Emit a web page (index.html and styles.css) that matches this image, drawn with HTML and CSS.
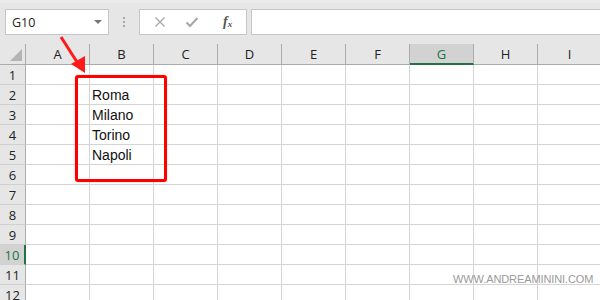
FILE: index.html
```html
<!DOCTYPE html>
<html>
<head>
<meta charset="utf-8">
<link rel="stylesheet" href="styles.css">
</head>
<body>
<div class="app">
  <div class="toolbar">
    <div class="namebox">
      <span class="ref">G10</span>
      <span class="caret"></span>
    </div>
    <div class="dots"><i></i><i></i><i></i></div>
    <div class="fxbox">
      <svg class="ico" width="12" height="12" viewBox="0 0 12 12"><path d="M1.5 1.5 L10.5 10.5 M10.5 1.5 L1.5 10.5" stroke="#a6a6a6" stroke-width="1.3" fill="none"/></svg>
      <svg class="ico" width="14" height="12" viewBox="0 0 14 12"><path d="M1.5 6.5 L5 10 L12.5 2" stroke="#a6a6a6" stroke-width="2" fill="none"/></svg>
      <span class="fx">f<sub>x</sub></span>
    </div>
    <div class="formula"></div>
  </div>
  <div class="sheet">
    <div class="corner"><span class="tri"></span></div>
    <div class="ch">A</div><div class="ch">B</div><div class="ch">C</div><div class="ch">D</div><div class="ch">E</div><div class="ch">F</div><div class="ch sel">G</div><div class="ch">H</div><div class="ch">I</div>

    <div class="rh">1</div><div class="c"></div><div class="c"></div><div class="c"></div><div class="c"></div><div class="c"></div><div class="c"></div><div class="c"></div><div class="c"></div><div class="c"></div>
    <div class="rh">2</div><div class="c"></div><div class="c">Roma</div><div class="c"></div><div class="c"></div><div class="c"></div><div class="c"></div><div class="c"></div><div class="c"></div><div class="c"></div>
    <div class="rh">3</div><div class="c"></div><div class="c">Milano</div><div class="c"></div><div class="c"></div><div class="c"></div><div class="c"></div><div class="c"></div><div class="c"></div><div class="c"></div>
    <div class="rh">4</div><div class="c"></div><div class="c">Torino</div><div class="c"></div><div class="c"></div><div class="c"></div><div class="c"></div><div class="c"></div><div class="c"></div><div class="c"></div>
    <div class="rh">5</div><div class="c"></div><div class="c">Napoli</div><div class="c"></div><div class="c"></div><div class="c"></div><div class="c"></div><div class="c"></div><div class="c"></div><div class="c"></div>
    <div class="rh">6</div><div class="c"></div><div class="c"></div><div class="c"></div><div class="c"></div><div class="c"></div><div class="c"></div><div class="c"></div><div class="c"></div><div class="c"></div>
    <div class="rh">7</div><div class="c"></div><div class="c"></div><div class="c"></div><div class="c"></div><div class="c"></div><div class="c"></div><div class="c"></div><div class="c"></div><div class="c"></div>
    <div class="rh">8</div><div class="c"></div><div class="c"></div><div class="c"></div><div class="c"></div><div class="c"></div><div class="c"></div><div class="c"></div><div class="c"></div><div class="c"></div>
    <div class="rh">9</div><div class="c"></div><div class="c"></div><div class="c"></div><div class="c"></div><div class="c"></div><div class="c"></div><div class="c"></div><div class="c"></div><div class="c"></div>
    <div class="rh sel">10</div><div class="c"></div><div class="c"></div><div class="c"></div><div class="c"></div><div class="c"></div><div class="c"></div><div class="c"></div><div class="c"></div><div class="c"></div>
    <div class="rh">11</div><div class="c"></div><div class="c"></div><div class="c"></div><div class="c"></div><div class="c"></div><div class="c"></div><div class="c"></div><div class="c"></div><div class="c"></div>
    <div class="rh">12</div><div class="c"></div><div class="c"></div><div class="c"></div><div class="c"></div><div class="c"></div><div class="c"></div><div class="c"></div><div class="c"></div><div class="c"></div>
  </div>
  <div class="highlight"></div>
  <svg class="arrow" width="600" height="300" viewBox="0 0 600 300">
    <line x1="61" y1="37" x2="77" y2="62" stroke="#ff1a1a" stroke-width="3"/>
    <polygon points="71,64 85,56 85,73" fill="#ff1a1a"/>
  </svg>
  <div class="watermark">WWW.ANDREAMININI.COM</div>
</div>
</body>
</html>
```
FILE: styles.css
```css
html, body {
  margin: 0;
  padding: 0;
  background: #e6e6e6;
}
.app {
  position: relative;
  width: 600px;
  height: 300px;
  overflow: hidden;
  font-family: "Open Sans", "Liberation Sans", sans-serif;
}
.toolbar {
  height: 44px;
  display: flex;
  align-items: flex-start;
  box-sizing: border-box;
  border-top: 3px solid #ebebeb;
  padding-top: 6px;
}
.namebox {
  margin-left: 5px;
  height: 24px;
  background: #fff;
  border: 1px solid #c6c6c6;
  display: flex;
  align-items: center;
  justify-content: space-between;
  padding: 0 6px 0 6px;
  box-sizing: content-box;
  width: 90px;
}
.ref {
  font-size: 12.5px;
  color: #222;
}
.caret {
  width: 0;
  height: 0;
  border-left: 4px solid transparent;
  border-right: 4px solid transparent;
  border-top: 4px solid #777;
}
.dots {
  width: 30px;
  height: 26px;
  display: flex;
  flex-direction: column;
  align-items: center;
  justify-content: center;
  gap: 2px;
}
.dots i {
  width: 2px;
  height: 2px;
  background: #a8a8a8;
  display: block;
}
.fxbox {
  width: 108px;
  height: 26px;
  background: #fff;
  border: 1px solid #c6c6c6;
  display: flex;
  align-items: center;
  padding-left: 14px;
  box-sizing: border-box;
}
.fxbox .ico:nth-child(1) { margin-right: 19px; }
.fxbox .ico:nth-child(2) { margin-right: 24px; }
.fx {
  font-family: "Liberation Serif", serif;
  font-style: italic;
  font-size: 14px;
  color: #555;
  font-weight: bold;
}
.fx sub {
  font-size: 9px;
  vertical-align: -1px;
}
.formula {
  margin-left: 4px;
  flex: 1;
  height: 24px;
  background: #fff;
  border: 1px solid #c6c6c6;
  border-right: none;
}
.sheet {
  display: grid;
  grid-template-columns: 26px repeat(9, 64px);
  grid-template-rows: 21px repeat(12, 20px);
  background: #fff;
}
.corner {
  background: #e6e6e6;
  border-right: 1px solid #ababab;
  border-bottom: 1px solid #ababab;
  position: relative;
}
.tri {
  position: absolute;
  right: 3px;
  bottom: 3px;
  width: 0;
  height: 0;
  border-left: 12px solid transparent;
  border-bottom: 12px solid #b4b4b4;
}
.ch {
  background: #e6e6e6;
  border-right: 1px solid #ababab;
  border-bottom: 1px solid #ababab;
  font-size: 13px;
  color: #222;
  display: flex;
  align-items: center;
  justify-content: center;
}
.ch.sel {
  background: #d2d2d2;
  color: #217346;
  border-bottom: 2px solid #217346;
}
.rh {
  background: #e6e6e6;
  border-right: 1px solid #ababab;
  border-bottom: 1px solid #d0d0d0;
  font-size: 13px;
  color: #222;
  display: flex;
  align-items: center;
  justify-content: center;
}
.rh.sel {
  background: #d2d2d2;
  color: #217346;
  border-right: 2px solid #217346;
}
.c {
  border-right: 1px solid #d4d4d4;
  border-bottom: 1px solid #d4d4d4;
  font-family: "Liberation Sans", sans-serif;
  font-size: 14px;
  color: #111;
  padding-left: 2px;
  display: flex;
  align-items: flex-end;
  padding-bottom: 1px;
  box-sizing: border-box;
}
.highlight {
  position: absolute;
  left: 75px;
  top: 75px;
  width: 86px;
  height: 101px;
  border: 3px solid #ff0000;
  border-radius: 3px;
  box-shadow: 0 0 1px #ff6060;
}
.arrow {
  position: absolute;
  left: 0;
  top: 0;
}
.watermark {
  position: absolute;
  left: 453px;
  top: 273px;
  font-family: "Liberation Sans", sans-serif;
  font-size: 11px;
  color: #9a9a9a;
  letter-spacing: -0.1px;
}
```
